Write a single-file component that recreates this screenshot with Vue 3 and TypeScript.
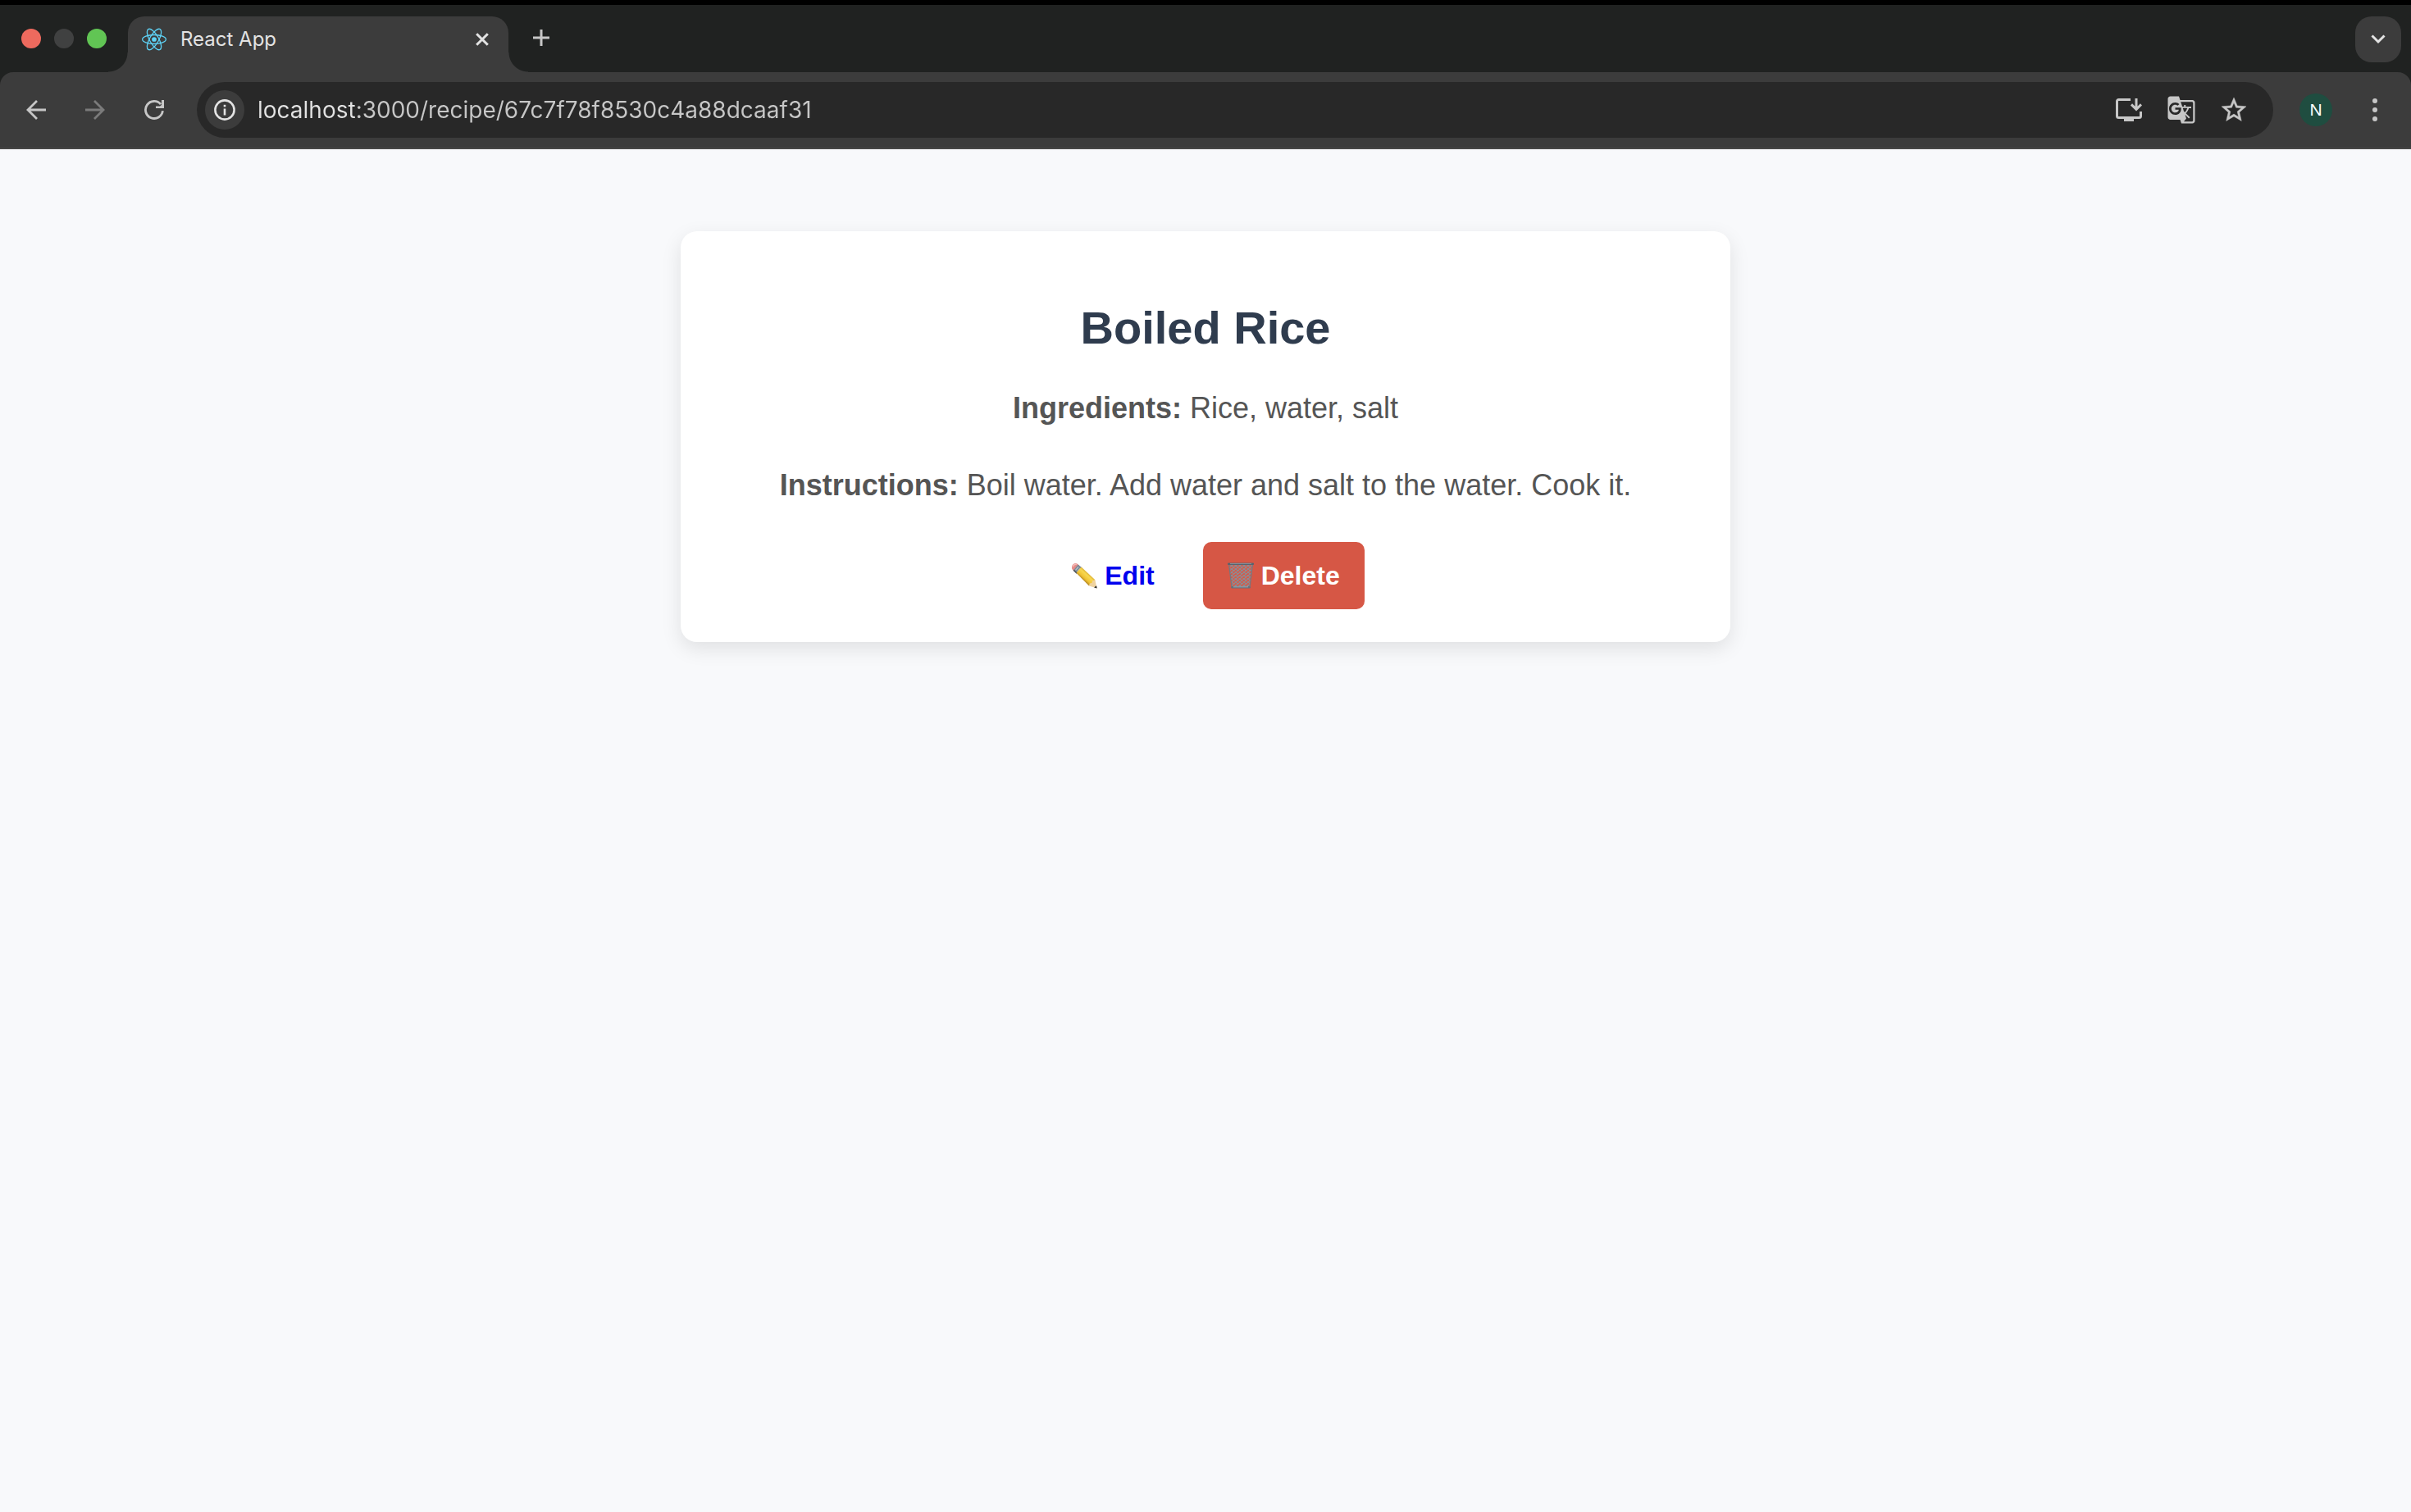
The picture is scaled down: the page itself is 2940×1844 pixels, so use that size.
<script setup lang="ts">
import { ref } from 'vue'

interface Recipe {
  id: string
  title: string
  ingredients: string
  instructions: string
}

const recipe: Recipe = {
  id: '67c7f78f8530c4a88dcaaf31',
  title: 'Boiled Rice',
  ingredients: 'Rice, water, salt',
  instructions: 'Boil water. Add water and salt to the water. Cook it.',
}

const address = ref(`localhost:3000/recipe/${recipe.id}`)
</script>

<template>
  <div class="window">
    <header class="chrome">
      <div class="tab-strip">
        <div class="lights">
          <span class="light red"></span>
          <span class="light idle"></span>
          <span class="light green"></span>
        </div>
        <div class="tab">
          <svg class="favicon" width="30" height="28" viewBox="-11.5 -10.5 23 21" fill="none" stroke="#5ed3f7" stroke-width="1">
            <circle r="2.2" fill="#5ed3f7" stroke="none" />
            <ellipse rx="11" ry="4.2" />
            <ellipse rx="11" ry="4.2" transform="rotate(60)" />
            <ellipse rx="11" ry="4.2" transform="rotate(120)" />
          </svg>
          <span class="tab-title">React App</span>
          <button class="tab-close" aria-label="Close tab">
            <svg width="16" height="16" viewBox="0 0 16 16" fill="none" stroke="#e3e3e3" stroke-width="3"><path d="M1.2 1.2l13.6 13.6M14.8 1.2L1.2 14.8" /></svg>
          </button>
        </div>
        <button class="new-tab" aria-label="New tab">
          <svg width="20" height="20" viewBox="0 0 20 20" fill="none" stroke="#c7c7c7" stroke-width="3"><path d="M10 0v20M0 10h20" /></svg>
        </button>
        <button class="tab-search" aria-label="Search tabs">
          <svg width="18" height="12" viewBox="0 0 18 12" fill="none" stroke="#e3e3e3" stroke-width="3"><path d="M1.5 1.5L9 9l7.5-7.5" /></svg>
        </button>
      </div>

      <div class="toolbar">
        <button class="tool" aria-label="Back">
          <svg width="24" height="24" viewBox="0 0 24 24" fill="none" stroke="#c7c7c7" stroke-width="2.8"><path d="M24 12H2M13 1L2 12l11 11" /></svg>
        </button>
        <button class="tool" aria-label="Forward" disabled>
          <svg width="24" height="24" viewBox="0 0 24 24" fill="none" stroke="#7b7b7b" stroke-width="2.8"><path d="M0 12h22M11 1l11 11-11 11" /></svg>
        </button>
        <button class="tool" aria-label="Reload">
          <svg width="24" height="24" viewBox="0 0 24 24" fill="none" stroke="#c7c7c7" stroke-width="2.8">
            <path d="M22.4 13.2A10.5 10.5 0 1 1 20 5.2" />
            <path d="M21 0h3v10H14V7.4h5L21 6z" fill="#c7c7c7" stroke="none" />
          </svg>
        </button>
        <div class="omnibox">
          <button class="site-info" aria-label="Site information">
            <svg width="26" height="26" viewBox="0 0 26 26" fill="none" stroke="#e3e3e3" stroke-width="2.6">
              <circle cx="13" cy="13" r="11.6" />
              <path d="M13 11.5v8" />
              <path d="M13 6.8v2.6" />
            </svg>
          </button>
          <input v-model="address" class="address" type="text" aria-label="Address" spellcheck="false" />
          <button class="action" aria-label="Install app">
            <svg width="32" height="28" viewBox="0 0 32 28" fill="none" stroke="#c7c7c7" stroke-width="3">
              <path d="M18 1.5H3.5a2 2 0 0 0-2 2v18a2 2 0 0 0 2 2h25a2 2 0 0 0 2-2V16" />
              <path d="M10 23h12v5H10z" fill="#c7c7c7" stroke="none" />
              <path d="M25 0v13.5M19 7.4l6 6 6-6" />
            </svg>
          </button>
          <button class="action" aria-label="Translate this page">
            <svg width="36" height="36" viewBox="0 0 24 24" fill="#c7c7c7">
              <path d="M21 4H11l-1-3H3c-1.1 0-2 .9-2 2v15c0 1.1.9 2 2 2h8l1 3h9c1.1 0 2-.9 2-2V6c0-1.1-.9-2-2-2zM7 16c-2.76 0-5-2.24-5-5s2.24-5 5-5c1.35 0 2.48.5 3.35 1.3L9.03 8.57c-.38-.36-1.04-.78-2.03-.78-1.74 0-3.15 1.44-3.15 3.21S5.26 14.21 7 14.21c2.01 0 2.84-1.44 2.92-2.41H7v-1.71h4.68c.07.31.12.61.12 1.02C11.8 13.97 9.89 16 7 16zm6.17-5.42h3.7c-.43 1.25-1.11 2.43-2.05 3.47-.31-.35-.6-.72-.86-1.1l-.79-2.37zm8.33 9.92c0 .55-.45 1-1 1H14l2-2.5-1.04-3.1 3.1 3.1.92-.92-3.3-3.25.02-.02c1.13-1.25 1.93-2.69 2.4-4.22H20v-1.3h-4.53V8h-1.29v1.29h-1.44L11.46 5.5h9.04c.55 0 1 .45 1 1v14z" />
            </svg>
          </button>
          <button class="action" aria-label="Bookmark this tab">
            <svg width="36" height="36" viewBox="0 0 24 24" fill="#c7c7c7" stroke="#c7c7c7" stroke-width="0.3">
              <path d="M22 9.24l-7.19-.62L12 2 9.19 8.63 2 9.24l5.46 4.73L5.82 21 12 17.27 18.18 21l-1.63-7.03L22 9.24zM12 15.4l-3.76 2.27 1-4.28-3.32-2.88 4.38-.38L12 6.1l1.71 4.04 4.38.38-3.32 2.88 1 4.28L12 15.4z" />
            </svg>
          </button>
        </div>
        <button class="tool" aria-label="Profile">
          <span class="avatar">N</span>
        </button>
        <button class="tool" aria-label="Menu">
          <svg width="8" height="28" viewBox="0 0 8 28" fill="#c7c7c7">
            <circle cx="4" cy="3" r="3" />
            <circle cx="4" cy="14" r="3" />
            <circle cx="4" cy="25" r="3" />
          </svg>
        </button>
      </div>
    </header>

    <main class="page">
      <article class="card">
        <h1>{{ recipe.title }}</h1>
        <p><strong>Ingredients:</strong> {{ recipe.ingredients }}</p>
        <p><strong>Instructions:</strong> {{ recipe.instructions }}</p>
        <div class="actions">
          <a class="btn edit" href="#edit">
            <svg width="32" height="32" viewBox="0 0 32 32" aria-hidden="true">
              <defs>
                <linearGradient id="pencil-body" gradientUnits="userSpaceOnUse" x1="21" y1="12" x2="13" y2="20.6">
                  <stop offset="0" stop-color="#d3a32a" />
                  <stop offset="0.3" stop-color="#f8d850" />
                  <stop offset="0.7" stop-color="#efc234" />
                  <stop offset="1" stop-color="#a97a18" />
                </linearGradient>
              </defs>
              <path d="M1 5.5C1 3 4 .6 7 1.2L10 3.6 3.6 10.4 1.2 8z" fill="#e58b88" />
              <path d="M2 5.2C3 3 5 2 7 2.2" fill="none" stroke="#f6bcb8" stroke-width="1.4" />
              <path d="M8.6 2.4L13 6 6.4 13.2 3 9.6z" fill="#7d8b96" />
              <path d="M9 5.5L5.5 9.4M11.4 7.2L7.8 11.2" stroke="#b9c4cc" stroke-width="1.2" />
              <path d="M3.2 9.2l4 4" stroke="#444c55" stroke-width="1.4" />
              <path d="M12.6 5.6L29.4 21.2 22 28.6 6.4 12.8z" fill="url(#pencil-body)" />
              <path d="M29.4 21.2L31.6 31.4 22 28.6l.8-3 2.8-.6.6-2.8z" fill="#efd3a0" />
              <path d="M31 28.2l.7 3.4-3.6-1z" fill="#2b2b2b" />
            </svg>
            Edit
          </a>
          <button class="btn delete" type="button">
            <svg width="32" height="32" viewBox="0 0 32 32" aria-hidden="true">
              <defs>
                <pattern id="bin-mesh" width="5" height="4" patternUnits="userSpaceOnUse">
                  <path d="M0 0l5 4M5 0L0 4" stroke="#8c8c94" stroke-width="1.1" />
                </pattern>
              </defs>
              <path d="M1.6 2.4h28.8L27 30H5z" fill="url(#bin-mesh)" />
              <path d="M1.6 2.4L5 30M30.4 2.4L27 30" stroke="#747880" stroke-width="1.2" />
              <path d="M1 1.8h30" stroke="#59636d" stroke-width="2.4" stroke-linecap="round" />
              <path d="M3 1.5h26" stroke="#8e9aa4" stroke-width="0.8" />
              <path d="M5.4 30.2h21.2" stroke="#66717b" stroke-width="2.4" stroke-linecap="round" />
              <path d="M7 29.8h18" stroke="#a4afb7" stroke-width="0.9" />
            </svg>
            Delete
          </button>
        </div>
      </article>
    </main>
  </div>
</template>

<style>
html,
body {
  margin: 0;
  background: #f8f9fb;
}
</style>

<style scoped>
* {
  box-sizing: border-box;
}

.window {
  min-height: 100vh;
  font-family: 'Liberation Sans', Arial, sans-serif;
}

button {
  display: flex;
  align-items: center;
  justify-content: center;
  padding: 0;
  border: 0;
  background: none;
}

svg {
  display: block;
  flex: none;
}

.chrome {
  border-top: 6px solid #000;
  background: #202221;
  font-family: Inter, Roboto, sans-serif;
}

.tab-strip {
  display: flex;
  align-items: flex-start;
  height: 82px;
  padding: 14px 12px 0 26px;
}

.lights {
  display: flex;
  gap: 16px;
  padding-top: 15px;
}

.light {
  width: 24px;
  height: 24px;
  border-radius: 50%;
}

.red {
  background: #ed6a5e;
}

.idle {
  background: #404141;
}

.green {
  background: #61c554;
}

.tab {
  position: relative;
  display: flex;
  align-items: center;
  width: 464px;
  height: 68px;
  margin-left: 26px;
  padding: 0 16px 12px 17px;
  border-radius: 20px 20px 0 0;
  background: #3c3c3c;
}

/* Flared feet joining the tab to the toolbar */
.tab::before,
.tab::after {
  content: '';
  position: absolute;
  bottom: 0;
  width: 24px;
  height: 24px;
}

.tab::before {
  right: 100%;
  background: radial-gradient(circle at 0 0, transparent 23px, #3c3c3c 24px);
}

.tab::after {
  left: 100%;
  background: radial-gradient(circle at 100% 0, transparent 23px, #3c3c3c 24px);
}

.tab-title {
  flex: 1;
  margin-left: 17px;
  color: #e3e3e3;
  font-size: 24px;
  line-height: 32px;
}

.tab-close {
  width: 32px;
  height: 32px;
}

.new-tab {
  width: 56px;
  height: 52px;
  margin-left: 12px;
}

.tab-search {
  width: 56px;
  height: 56px;
  margin-left: auto;
  border-radius: 20px;
  background: #3c3c3c;
}

.toolbar {
  display: flex;
  align-items: center;
  height: 94px;
  padding: 0 8px;
  border-bottom: 2px solid #474747;
  border-radius: 16px 16px 0 0;
  background: #3c3c3c;
}

.tool {
  width: 72px;
  height: 68px;
}

.omnibox {
  display: flex;
  flex: 1;
  align-items: center;
  height: 68px;
  margin: 0 16px;
  padding: 0 16px 0 10px;
  border-radius: 34px;
  background: #282828;
}

.site-info {
  width: 48px;
  height: 48px;
  border-radius: 50%;
  background: #3c3c3c;
}

/* The host part of the address is brighter than the path */
.address {
  flex: 1;
  min-width: 0;
  height: 48px;
  margin-left: 16px;
  padding: 0;
  border: 0;
  outline: 0;
  background: linear-gradient(to right, #e3e3e3 120px, #c7c7c7 120px);
  background-clip: text;
  -webkit-background-clip: text;
  color: transparent;
  font-family: inherit;
  font-size: 28px;
}

.action {
  width: 64px;
  height: 68px;
}

.avatar {
  width: 40px;
  height: 40px;
  border-radius: 50%;
  background: #1f4d40;
  color: #fff;
  font-size: 21px;
  line-height: 40px;
  text-align: center;
}

.page {
  padding: 100px 20px;
}

.card {
  max-width: 1280px;
  margin: 0 auto;
  padding: 40px;
  border-radius: 20px;
  background: #fff;
  box-shadow: 0 8px 24px rgba(0, 0, 0, 0.1);
  text-align: center;
}

h1 {
  margin: 47px 0 38px;
  color: #2f3c4e;
  font-size: 56px;
  line-height: 62px;
}

p {
  margin: 0 0 36px;
  color: #555;
  font-size: 36px;
  line-height: 58px;
}

.actions {
  display: flex;
  justify-content: center;
  gap: 29px;
  margin-top: 40px;
}

.btn {
  display: flex;
  align-items: center;
  gap: 9px;
  padding: 20px 30px;
  border-radius: 10px;
  font-family: inherit;
  font-size: 32px;
  font-weight: bold;
  line-height: 42px;
  text-decoration: none;
}

.edit {
  color: #0000ee;
}

.delete {
  background: #d65745;
  color: #fff;
}
</style>
